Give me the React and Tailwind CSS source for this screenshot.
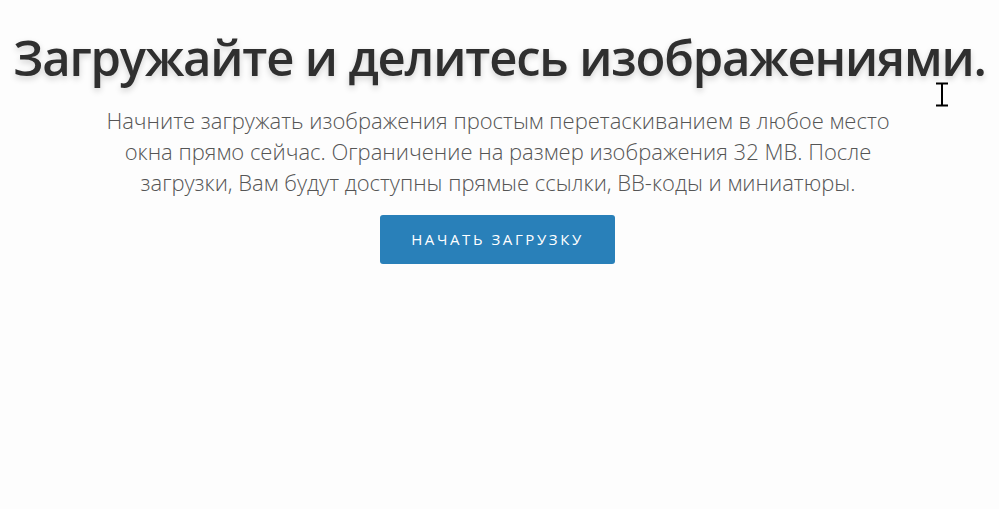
export default function App() {
  return (
    <div className="relative w-[999px] h-[509px] bg-[#fdfdfd] overflow-hidden" style={{ fontFamily: '"Open Sans", sans-serif' }}>
      <div className="flex flex-col items-center pt-[26px]">
        <h1 className="text-[49px] leading-[62px] font-semibold tracking-[-1.2px] text-[#2f2f2f] whitespace-nowrap [text-shadow:0_3px_6px_rgba(0,0,0,0.18)]">
          Загружайте и делитесь изображениями.
        </h1>
        <p className="mt-[17px] mr-[3px] w-[800px] text-center text-[22px] leading-[31px] font-light text-[#555555]">
          Начните загружать изображения простым перетаскиванием в любое место окна прямо сейчас. Ограничение на размер изображения 32 MB. После загрузки, Вам будут доступны прямые ссылки, BB-коды и миниатюры.
        </p>
        <button className="mt-[17px] mr-[4px] w-[235px] h-[49px] rounded-[3px] bg-[#2980b9] text-white text-[15px] uppercase tracking-[2.6px] font-normal">
          Начать загрузку
        </button>
      </div>
      <svg className="absolute left-[935px] top-[82px]" width="14" height="25" viewBox="0 0 14 25">
        <path d="M1 1.5h12M7 1.5v22M1 23.5h12" stroke="#000" strokeWidth="2" fill="none" />
      </svg>
    </div>
  );
}
